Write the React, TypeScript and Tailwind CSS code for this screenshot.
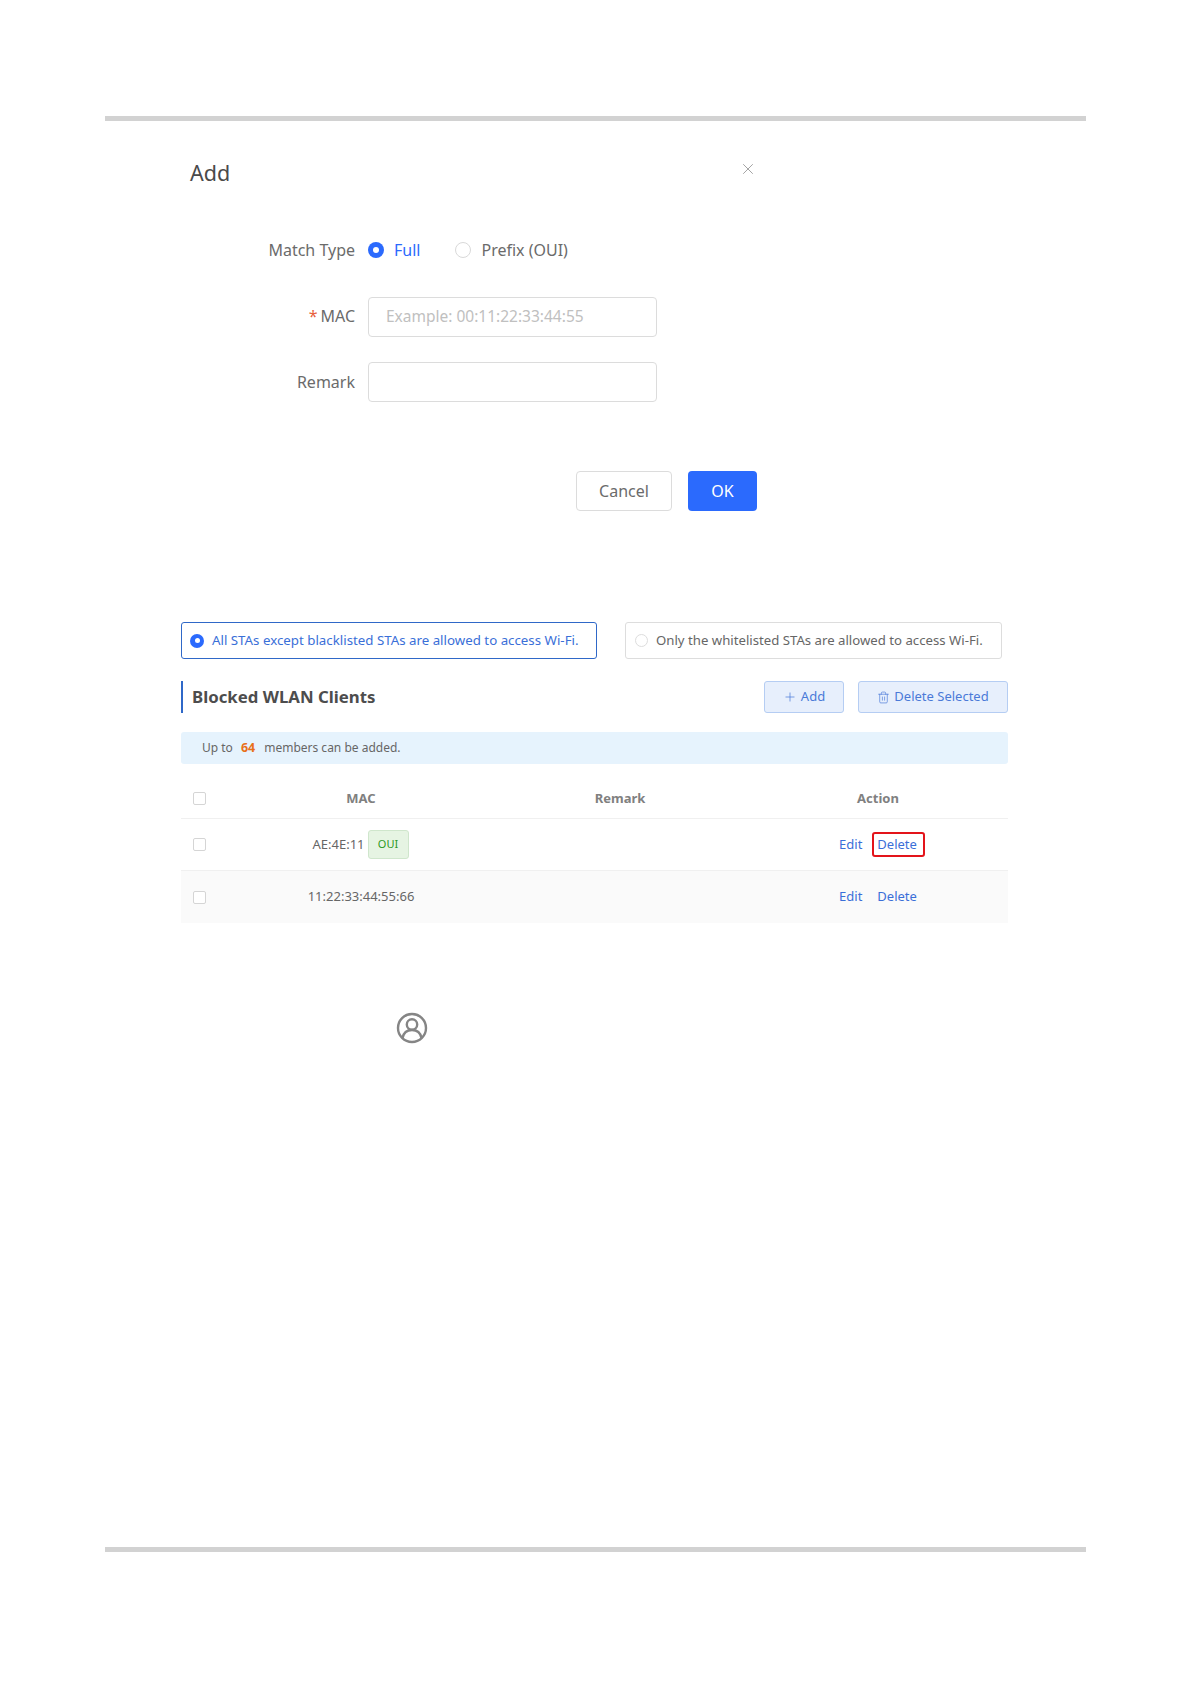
import { Plus, Trash2, X } from "lucide-react"

function Radio({ on }: { on?: boolean }) {
  if (on) {
    return (
      <span className="flex h-[16px] w-[16px] shrink-0 items-center justify-center rounded-full bg-[#2b6afd]">
        <span className="h-[6px] w-[6px] rounded-full bg-white" />
      </span>
    )
  }
  return <span className="block h-[16px] w-[16px] shrink-0 rounded-full border border-[#d9d9d9] bg-white" />
}

function Check() {
  return <span className="block h-[13px] w-[13px] rounded-[2px] border border-[#d5d5d5] bg-white" />
}

function FormRow({ label, required, children, className, labelClass }: { label: string; required?: boolean; children: React.ReactNode; className?: string; labelClass?: string }) {
  return (
    <div className={"flex h-[40px] items-center " + (className ?? "")}>
      <div className={"w-[165px] text-right text-[16px] text-[#6b6b6b] " + (labelClass ?? "")}>
        {required && <span className="mr-[3px] text-[#e8603c]">*</span>}
        {label}
      </div>
      <div className="ml-[13px] flex items-center">{children}</div>
    </div>
  )
}

function Row({ mac, oui, striped, marked }: { mac: string; oui?: boolean; striped?: boolean; marked?: boolean }) {
  return (
    <div className={"grid h-[52px] grid-cols-[49px_262px_256px_260px] items-center text-[13px] " + (striped ? "bg-[#fafafa]" : "border-b border-[#f0f0f0]")}>
      <div className="pl-[12px]">
        <Check />
      </div>
      <div className="flex items-center justify-center gap-[3px] text-[#666666]">
        <span>{mac}</span>
        {oui && (
          <span className="mr-[1px] flex h-[29px] w-[41px] items-center justify-center rounded-[3px] border border-[#cfe6cc] bg-[#e6f4e3] text-[11px] text-[#2e9a1f]">
            OUI
          </span>
        )}
      </div>
      <div />
      <div className="flex items-center justify-center gap-[15px] text-[#3a6fd8]">
        <span>Edit</span>
        <span className="relative">
          Delete
          {marked && <span className="absolute -bottom-[3px] -left-[5px] -right-[8px] -top-[3px] rounded-[3px] border-[2.5px] border-[#e3141a]" />}
        </span>
      </div>
    </div>
  )
}

export default function App() {
  return (
    <div className="h-[1684px] bg-white px-[105px] pt-[116px] font-['Noto_Sans',sans-serif]">
      <div className="h-[5px] bg-[#d2d2d2]" />

      {/* Add dialog */}
      <div className="ml-[85px] w-[567px]">
        <div className="mt-[36px] flex h-[32px] items-center justify-between">
          <span className="text-[21.5px] text-[#4a4a4a]">Add</span>
          <X className="mb-[9px] h-[18px] w-[18px] text-[#9a9a9a]" strokeWidth={1.2} />
        </div>

        <div className="mt-[41px]">
          <FormRow label="Match Type">
            <Radio on />
            <span className="ml-[10px] text-[16px] text-[#2b6afd]">Full</span>
            <span className="ml-[35px]">
              <Radio />
            </span>
            <span className="ml-[10px] text-[16px] text-[#6b6b6b]">Prefix (OUI)</span>
          </FormRow>
          <FormRow label="MAC" required className="mt-[27px]" labelClass="pb-[3px]">
            <div className="flex h-[40px] w-[289px] items-center rounded-[4px] border border-[#dcdcdc] pb-[1px] pl-[17px] text-[15.5px] text-[#c0c0c0]">
              Example: 00:11:22:33:44:55
            </div>
          </FormRow>
          <FormRow label="Remark" className="mt-[25px]" labelClass="text-[15.5px]">
            <div className="h-[40px] w-[289px] rounded-[4px] border border-[#dcdcdc]" />
          </FormRow>
        </div>

        <div className="mt-[69px] flex justify-end gap-[16px]">
          <div className="flex h-[40px] w-[96px] items-center justify-center rounded-[4px] border border-[#dcdcdc] text-[16px] text-[#6b6b6b]">
            Cancel
          </div>
          <div className="flex h-[40px] w-[69px] items-center justify-center rounded-[4px] bg-[#2b6afd] text-[16px] text-white">
            OK
          </div>
        </div>
      </div>

      {/* Blocked clients panel */}
      <div className="ml-[76px] mt-[111px] w-[827px]">
        <div className="flex gap-[28px] text-[13.3px]">
          <div className="flex h-[37px] w-[416px] items-center rounded-[3px] border border-[#2f68c8] pl-[8px] text-[#3a6fd8]">
            <span className="flex h-[14px] w-[14px] items-center justify-center rounded-full bg-[#2b6afd]">
              <span className="h-[5px] w-[5px] rounded-full bg-white" />
            </span>
            <span className="ml-[8px]">All STAs except blacklisted STAs are allowed to access Wi-Fi.</span>
          </div>
          <div className="flex h-[37px] w-[377px] items-center rounded-[3px] border border-[#dddddd] pl-[9px] text-[#666666]">
            <span className="h-[13px] w-[13px] rounded-full border border-[#dddddd]" />
            <span className="ml-[8px] text-[13.2px]">Only the whitelisted STAs are allowed to access Wi-Fi.</span>
          </div>
        </div>

        <div className="mt-[22px] flex h-[32px] items-center border-l-2 border-[#2f68c8] pl-[9px]">
          <span className="text-[16.8px] font-bold text-[#4d4d4d]">Blocked WLAN Clients</span>
          <div className="ml-auto flex gap-[14px] text-[13px] text-[#4a7ad8]">
            <div className="flex h-[32px] w-[80px] items-center justify-center gap-[4px] rounded-[3px] border border-[#b5cdf3] bg-[#e7effc]">
              <Plus className="h-[14px] w-[14px]" strokeWidth={1.25} />
              Add
            </div>
            <div className="flex h-[32px] w-[150px] items-center justify-center gap-[4px] rounded-[3px] border border-[#b5cdf3] bg-[#e7effc]">
              <Trash2 className="h-[13px] w-[13px]" strokeWidth={1.25} />
              Delete Selected
            </div>
          </div>
        </div>

        <div className="mt-[19px] flex h-[32px] items-center rounded-[3px] bg-[#e6f3fd] pl-[21px] text-[12px] text-[#666666]">
          Up to
          <span className="ml-[8px] mr-[9px] text-[12.5px] font-bold text-[#e8701a]">64</span>
          members can be added.
        </div>

        <div className="mt-[15px]">
          <div className="grid h-[40px] grid-cols-[49px_262px_256px_260px] items-center border-b border-[#f0f0f0] text-[13px] font-bold text-[#808080]">
            <div className="pl-[12px]">
              <Check />
            </div>
            <div className="text-center">MAC</div>
            <div className="text-center">Remark</div>
            <div className="text-center">Action</div>
          </div>
          <Row mac="AE:4E:11" oui marked />
          <Row mac="11:22:33:44:55:66" striped />
        </div>

        <svg className="ml-[215px] mt-[89px] block h-[32px] w-[32px]" viewBox="0 0 32 32" fill="none" stroke="#858585" strokeWidth="2.4">
          <circle cx="16" cy="16" r="14" />
          <circle cx="16" cy="12.5" r="5.2" />
          <path d="M6.5 26c1-5 4.5-8 9.5-8s8.5 3 9.5 8" />
        </svg>
      </div>

      <div className="mt-[503px] h-[5px] bg-[#d2d2d2]" />
    </div>
  )
}
